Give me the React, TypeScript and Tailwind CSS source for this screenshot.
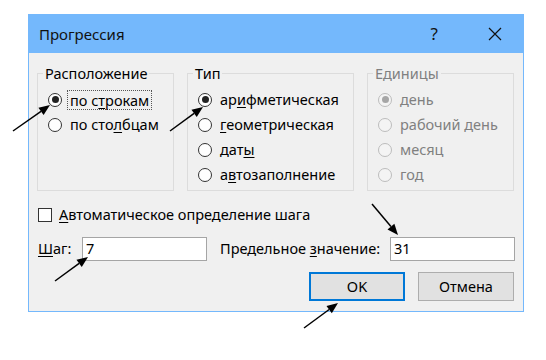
import React from 'react'

const font = { fontFamily: '"Noto Sans", "Open Sans", sans-serif' }

const Radio = ({ checked, disabled }: { checked?: boolean; disabled?: boolean }) => (
    <span
        className={`w-[14px] h-[14px] rounded-full border flex items-center justify-center shrink-0 ${
            disabled ? 'border-[#bcbcbc] bg-[#f4f4f4]' : 'border-[#333] bg-white'
        }`}
    >
        {checked && (
            <span className={`w-[7px] h-[7px] rounded-full ${disabled ? 'bg-[#a6a6a6]' : 'bg-[#222]'}`} />
        )}
    </span>
)

const Row = ({ children, checked, disabled }: any) => (
    <div className="h-[25px] flex items-center gap-[8px]">
        <Radio checked={checked} disabled={disabled} />
        <span className={disabled ? 'text-[#808080]' : 'text-black'}>{children}</span>
    </div>
)

const U = ({ children }: any) => <span className="underline underline-offset-2">{children}</span>

const Group = ({ title, width, disabled, children }: any) => (
    <fieldset className={`${width} h-[128px] border border-[#dcdcdc] pl-[10px] pt-[4px]`}>
        <legend className={`-ml-[5px] px-[2px] leading-[20px] ${disabled ? 'text-[#808080]' : 'text-black'}`}>
            {title}
        </legend>
        {children}
    </fieldset>
)

// стрелка-аннотация: хвост -> острие
const Arrow = ({ x1, y1, x2, y2 }: any) => {
    const a = Math.atan2(y2 - y1, x2 - x1)
    const len = 11
    const w = 4.5
    const bx = x2 - len * Math.cos(a)
    const by = y2 - len * Math.sin(a)
    const px = -Math.sin(a) * w
    const py = Math.cos(a) * w
    return (
        <g>
            <line x1={x1} y1={y1} x2={bx} y2={by} stroke="black" strokeWidth={1.5} />
            <polygon points={`${x2},${y2} ${bx + px},${by + py} ${bx - px},${by - py}`} fill="black" />
        </g>
    )
}

export default function App() {
    return (
        <div className="relative w-[546px] h-[360px] bg-white pt-[14px] pl-[28px] text-[14.5px]" style={font}>
            {/* окно */}
            <div className="w-[496px] h-[298px] border border-[#74b8fc] bg-[#f0f0f0] flex flex-col">
                {/* заголовок */}
                <div className="h-[38px] bg-[#74b8fc] flex items-center pl-[10px] pr-[21px] shrink-0">
                    <span className="text-[15px] text-[#111]">Прогрессия</span>
                    <span className="ml-auto text-[17px] text-[#111] mr-[50px]">?</span>
                    <svg width="14" height="14" viewBox="0 0 14 14">
                        <path d="M1 1 L13 13 M13 1 L1 13" stroke="#111" strokeWidth="1.2" />
                    </svg>
                </div>

                <div className="flex flex-col pt-[10px] px-[8px]">
                    <div className="flex gap-[13px]">
                        <Group title="Расположение" width="w-[137px]">
                            <div className="h-[25px] flex items-center gap-[5px]">
                                <Radio checked />
                                <span className="border border-dotted border-[#555] px-[2px] leading-[18px]">
                                    по с<U>т</U>рокам
                                </span>
                            </div>
                            <Row>
                                по сто<U>л</U>бцам
                            </Row>
                        </Group>
                        <Group title="Тип" width="w-[167px]">
                            <Row checked>
                                ар<U>и</U>фметическая
                            </Row>
                            <Row>
                                <U>г</U>еометрическая
                            </Row>
                            <Row>
                                дат<U>ы</U>
                            </Row>
                            <Row>
                                а<U>в</U>тозаполнение
                            </Row>
                        </Group>
                        <Group title="Единицы" width="w-[147px]" disabled>
                            <Row checked disabled>
                                день
                            </Row>
                            <Row disabled>рабочий день</Row>
                            <Row disabled>месяц</Row>
                            <Row disabled>год</Row>
                        </Group>
                    </div>

                    {/* автошаг */}
                    <div className="h-[20px] mt-[14px] flex items-center gap-[7px] pl-[1px]">
                        <span className="w-[14px] h-[14px] border border-[#333] bg-white shrink-0" />
                        <span>
                            <U>А</U>втоматическое определение шага
                        </span>
                    </div>

                    {/* поля */}
                    <div className="h-[24px] mt-[12px] flex items-center pl-[1px]">
                        <span className="w-[44px]">
                            <U>Ш</U>аг:
                        </span>
                        <div className="w-[125px] h-[24px] border border-[#a5a5a5] bg-white flex items-center px-[3px]">
                            7
                        </div>
                        <span className="w-[183px] pl-[13px]">
                            Предельное <U>з</U>начение:
                        </span>
                        <div className="w-[125px] h-[24px] border border-[#a5a5a5] bg-white flex items-center px-[3px]">
                            31
                        </div>
                    </div>

                    {/* кнопки */}
                    <div className="h-[29px] mt-[11px] flex justify-end gap-[13px] pr-[1px]">
                        <button className="w-[96px] h-[29px] border-2 border-[#0078d7] bg-[#e1e1e1]">OK</button>
                        <button className="w-[96px] h-[29px] border border-[#adadad] bg-[#e1e1e1]">Отмена</button>
                    </div>
                </div>
            </div>

            {/* стрелки */}
            <svg className="absolute left-0 top-0 pointer-events-none" width="546" height="360">
                <Arrow x1={13} y1={131} x2={50} y2={105} />
                <Arrow x1={170} y1={131} x2={203} y2={107} />
                <Arrow x1={55} y1={281} x2={88} y2={257} />
                <Arrow x1={372} y1={204} x2={398} y2={235} />
                <Arrow x1={304} y1={328} x2={338} y2={303} />
            </svg>
        </div>
    )
}
